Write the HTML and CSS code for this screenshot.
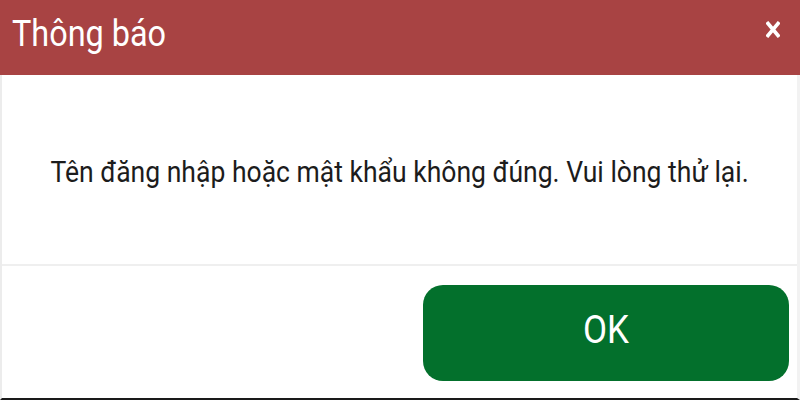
FILE: index.html
```html
<!DOCTYPE html>
<html lang="vi">
<head>
    <meta charset="UTF-8">
    <meta name="viewport" content="width=device-width, initial-scale=1.0">
    <title>Thông báo</title>
    <link rel="stylesheet" href="styles.css">
</head>
<body>
    <div class="dialog">
        <div class="dialog-header">
            <h1 class="dialog-title">Thông báo</h1>
            <svg class="close" width="14" height="17" viewBox="0 0 14 17">
                <path d="M2 2.5 L12 14.5 M12 2.5 L2 14.5" stroke="#fff" stroke-width="3.6" stroke-linecap="square"/>
            </svg>
        </div>
        <div class="dialog-body">
            <p class="message">Tên đăng nhập hoặc mật khẩu không đúng. Vui lòng thử lại.</p>
        </div>
        <div class="dialog-footer">
            <button class="btn-ok"><span class="btn-label">OK</span></button>
        </div>
    </div>
</body>
</html>
```

FILE: styles.css
```css
body {
    margin: 0;
    font-family: Roboto, "Noto Sans", sans-serif;
    background: #fff;
}
.dialog {
    width: 800px;
    height: 400px;
    box-sizing: border-box;
    display: flex;
    flex-direction: column;
    border-left: 2px solid #ececec;
    border-right: 3px solid #f2f2f2;
    border-bottom: 2px solid #1a1a1a;
}
.dialog-header {
    height: 75px;
    background-color: #a84343;
    display: flex;
    align-items: center;
    justify-content: space-between;
    padding: 0 20px 0 12px;
    margin-left: -2px;
    margin-right: -3px;
}
.dialog-title {
    margin: 0;
    color: #fff;
    font-size: 36px;
    font-weight: 400;
    line-height: 1;
    margin-top: -8px;
    transform: scaleX(0.9);
    transform-origin: left center;
}
.close {
    margin-top: -16px;
}
.dialog-body {
    height: 189px;
    display: flex;
    align-items: center;
    justify-content: center;
}
.message {
    margin: 0;
    margin-top: 4px;
    font-size: 29px;
    color: #1c1c1c;
    white-space: nowrap;
    transform: scaleX(0.915);
}
.dialog-footer {
    flex: 1;
    border-top: 2px solid #efefef;
    display: flex;
    justify-content: flex-end;
    align-items: flex-start;
    padding: 19px 8px 0 0;
}
.btn-ok {
    width: 366px;
    height: 96px;
    padding-bottom: 8px;
    background-color: #03702c;
    color: #fff;
    border: none;
    border-radius: 20px;
    font-family: Roboto, "Noto Sans", sans-serif;
    font-size: 38px;
    cursor: pointer;
}
.btn-label {
    display: inline-block;
    transform: scaleX(0.92);
}
```
